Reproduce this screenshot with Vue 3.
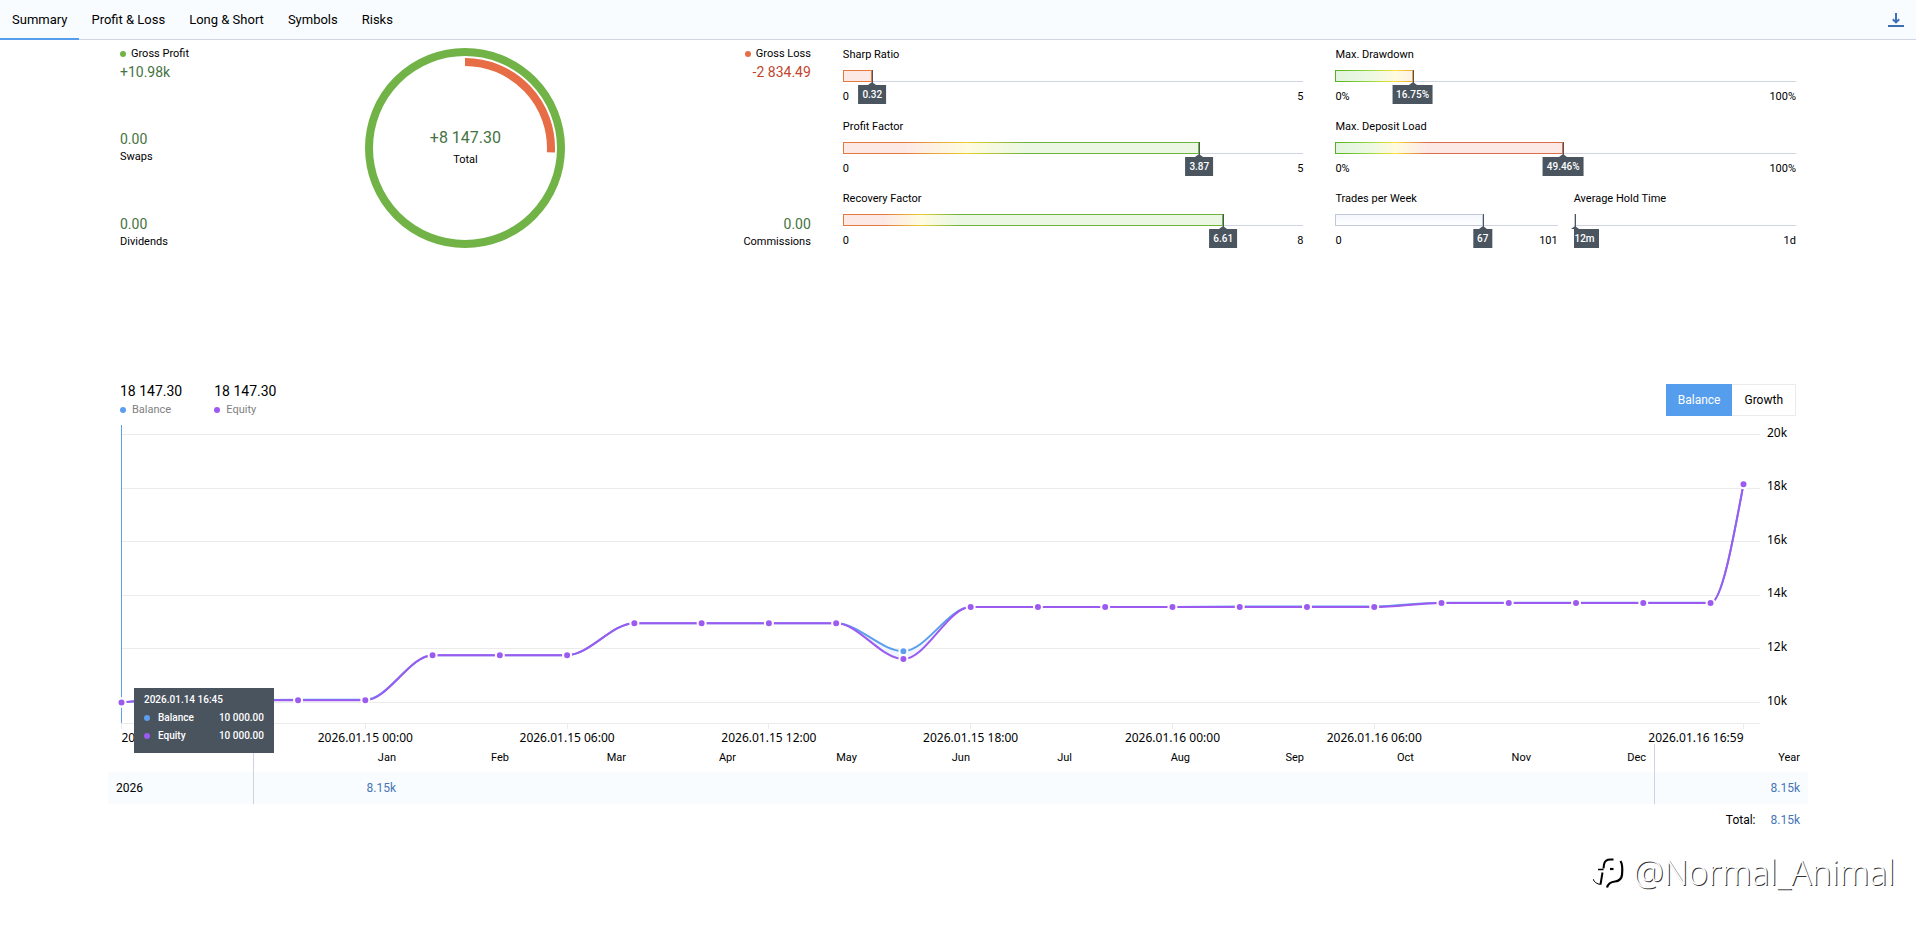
<template>
  <div class="report">
    <header class="topbar">
      <nav class="tabs">
        <button
          v-for="tab in tabs"
          :key="tab"
          class="tab"
          :class="{ active: tab === activeTab }"
          @click="activeTab = tab"
        >{{ tab }}</button>
      </nav>
      <button class="download" aria-label="Download">
        <svg width="16" height="16" viewBox="0 0 16 16">
          <path d="M8 1v9M4.800 7.200L8 10.400l3.200-3.200" fill="none" stroke="#3f6fb5" stroke-width="2" />
          <rect x="0" y="13" width="16" height="2" fill="#3f6fb5" />
        </svg>
      </button>
    </header>

    <main class="content">
      <section class="metrics">
        <!-- Totals -->
        <div class="totals">
          <div class="totals-side">
            <div class="total-item">
              <span class="label"><i class="dot green"></i>Gross Profit</span>
              <span class="amount">+10.98k</span>
            </div>
            <div class="total-item">
              <span class="amount">0.00</span>
              <span class="label">Swaps</span>
            </div>
            <div class="total-item">
              <span class="amount">0.00</span>
              <span class="label">Dividends</span>
            </div>
          </div>

          <div class="ring">
            <svg width="200" height="200" viewBox="0 0 200 200">
              <circle cx="100" cy="100" r="96" fill="none" stroke="#71b347" stroke-width="8" />
              <path :d="lossArc" fill="none" stroke="#e66d45" stroke-width="8" />
            </svg>
            <div class="ring-text">
              <span class="ring-value">+8 147.30</span>
              <span class="label">Total</span>
            </div>
          </div>

          <div class="totals-side right">
            <div class="total-item">
              <span class="label"><i class="dot red"></i>Gross Loss</span>
              <span class="amount negative">-2 834.49</span>
            </div>
            <div class="total-item">
              <span class="amount">0.00</span>
              <span class="label">Commissions</span>
            </div>
          </div>
        </div>

        <!-- Gauges -->
        <div v-for="(column, i) in gaugeColumns" :key="i" class="gauges">
          <div
            v-for="gauge in column"
            :key="gauge.title"
            class="gauge"
            :class="{ half: gauge.half }"
          >
            <div class="gauge-title">{{ gauge.title }}</div>
            <div class="gauge-track">
              <div
                class="gauge-fill"
                :style="{ width: gauge.percent + '%', background: fillBackground(gauge) }"
              ></div>
              <div class="gauge-marker" :style="{ left: gauge.percent + '%' }">
                <span class="gauge-badge" :class="{ clipped: gauge.clipped }">{{ gauge.value }}</span>
              </div>
            </div>
            <div class="gauge-range">
              <span>{{ gauge.min }}</span>
              <span>{{ gauge.max }}</span>
            </div>
          </div>
        </div>
      </section>

      <section class="chart-section">
        <div class="chart-head">
          <div class="legend">
            <div v-for="item in legend" :key="item.name" class="legend-item">
              <span class="legend-value">{{ item.value }}</span>
              <span class="legend-name"><i class="dot" :class="item.color"></i>{{ item.name }}</span>
            </div>
          </div>
          <div class="switch">
            <button :class="{ active: mode === 'Balance' }" @click="mode = 'Balance'">Balance</button>
            <button :class="{ active: mode === 'Growth' }" @click="mode = 'Growth'">Growth</button>
          </div>
        </div>

        <div ref="chart" class="chart">
          <svg :width="width" :height="326">
            <g v-for="level in levels" :key="level">
              <line class="grid" x1="1" :x2="width - 36" :y1="snap(yOf(level))" :y2="snap(yOf(level))" />
              <text class="axis" :x="width - 29" :y="Math.round(yOf(level)) + 2">{{ level / 1000 }}k</text>
            </g>
            <line class="grid" x1="1" :x2="width - 36" y1="305.5" y2="305.5" />
            <g v-for="tick in ticks" :key="tick.text">
              <line class="grid" :x1="snap(xOf(tick.hour))" :x2="snap(xOf(tick.hour))" y1="306" y2="311" />
              <text class="axis" :x="xOf(tick.hour)" y="324" :text-anchor="tick.anchor || 'middle'">{{ tick.text }}</text>
            </g>
            <line class="cursor" x1="1.5" x2="1.5" y1="7" y2="305" />
            <path :d="areaPath" class="area" />
            <path :d="balancePath" class="line balance" />
            <circle v-for="(p, i) in balancePoints" :key="'b' + i" :cx="p.x" :cy="p.y" r="4" class="point balance" />
            <path :d="equityPath" class="line equity" />
            <circle v-for="(p, i) in equityPoints" :key="'e' + i" :cx="p.x" :cy="p.y" r="4" class="point equity" />
          </svg>
          <div class="tooltip">
            <div>2026.01.14 16:45</div>
            <div class="tooltip-row"><i class="dot blue"></i><span>Balance</span><b>10 000.00</b></div>
            <div class="tooltip-row"><i class="dot purple"></i><span>Equity</span><b>10 000.00</b></div>
          </div>
        </div>

        <table class="months">
          <colgroup>
            <col v-for="(w, i) in columnWidths" :key="i" :style="{ width: w / 17 + '%' }" />
          </colgroup>
          <thead>
            <tr>
              <th></th>
              <th v-for="month in months" :key="month">{{ month }}</th>
              <th>Year</th>
            </tr>
          </thead>
          <tbody>
            <tr>
              <th>2026</th>
              <td v-for="month in months" :key="month">{{ month === 'Jan' ? '8.15k' : '' }}</td>
              <td>8.15k</td>
            </tr>
          </tbody>
          <tfoot>
            <tr>
              <td colspan="14"><span class="sum-label">Total:</span>8.15k</td>
            </tr>
          </tfoot>
        </table>
      </section>
    </main>

    <div class="watermark">
      <svg width="32" height="34" viewBox="0 0 32 34" fill="none" stroke="#000">
        <path d="M20.500 4.500h-3c-4.500 0-6 2-6.500 5l-.5 4" stroke-width="2" />
        <path d="M5 14.500h5.500" stroke-width="1.500" />
        <path d="M17 14h3.500" stroke-width="2.200" />
        <path d="M9.500 17.500L7.500 29.500" stroke-width="2" />
        <path d="M0 24c1 3 4 5 7.500 5.500" stroke-width="1" />
        <path d="M27.500 6c2 3 2 9 1.500 14-.5 4-3 6-7 6.500-4.500.5-7 2.500-8 6" stroke-width="2.200" />
      </svg>
      <span>@Normal_Animal</span>
    </div>
  </div>
</template>

<script setup>
import { ref, computed, onMounted, onUnmounted } from "vue";

const tabs = ["Summary", "Profit & Loss", "Long & Short", "Symbols", "Risks"];
const activeTab = ref("Summary");
const mode = ref("Balance");

// Loss arc: share of gross profit, drawn clockwise from the top
const lossAngle = (2834.49 / 10981.79) * Math.PI * 2;
const lossArc = `M100 14A86 86 0 0 1 ${100 + 86 * Math.sin(lossAngle)} ${100 - 86 * Math.cos(lossAngle)}`;

// Gradient stops: [position on the full track in %, border color, fill color]
const RED = ["#e5793f", "#fce9e6"];
const YELLOW = ["#e8cf35", "#fefbe0"];
const GREEN = ["#6db33f", "#ebf7e2"];
const rising = (a, b, c) => [[a, ...RED], [b, ...YELLOW], [c, ...GREEN]];
const falling = [
  [0, "#54b022", "#e2f4de"],
  [7, "#8fd63f", "#ecf8e2"],
  [13, "#fbe03c", "#fefbe0"],
  [20, "#dd6c48", "#fce9e6"],
];

const gaugeColumns = [
  [
    { title: "Sharp Ratio", value: "0.32", percent: 6.4, min: "0", max: "5", stops: rising(13, 27, 40) },
    { title: "Profit Factor", value: "3.87", percent: 77.4, min: "0", max: "5", stops: rising(13, 27, 40) },
    { title: "Recovery Factor", value: "6.61", percent: 82.6, min: "0", max: "8", stops: rising(9, 17, 25) },
  ],
  [
    { title: "Max. Drawdown", value: "16.75%", percent: 16.75, min: "0%", max: "100%", stops: falling },
    { title: "Max. Deposit Load", value: "49.46%", percent: 49.46, min: "0%", max: "100%", stops: falling },
    { title: "Trades per Week", value: "67", percent: 66.3, min: "0", max: "101", half: true },
    { title: "Average Hold Time", value: "12m", percent: 0.8, min: "", max: "1d", half: true, clipped: true },
  ],
];

const fillBackground = (gauge) => {
  if (!gauge.stops) {
    return "linear-gradient(#f3f6fd, #ffffff) padding-box, linear-gradient(#c3c9da, #c3c9da) border-box";
  }
  const gradient = (index) =>
    "linear-gradient(90deg, " +
    gauge.stops.map((s) => `${s[index]} ${(s[0] / gauge.percent) * 100}%`).join(", ") +
    ")";
  return `${gradient(2)} padding-box, ${gradient(1)} border-box`;
};

const legend = [
  { name: "Balance", value: "18 147.30", color: "blue" },
  { name: "Equity", value: "18 147.30", color: "purple" },
];

// Chart scale follows the container width
const chart = ref(null);
const width = ref(1676);
const START = -7.25;
const END = 40.98;

const xOf = (hour) => 1.5 + ((hour - START) / (END - START)) * (width.value - 54);
const yOf = (value) => 284.5 - ((value - 10000) / 2000) * 53.6;
const snap = (v) => Math.floor(v) + 0.5;

const levels = [20000, 18000, 16000, 14000, 12000, 10000];
const ticks = [
  { hour: START, text: "2026.01.14 16:45", anchor: "start" },
  { hour: 0, text: "2026.01.15 00:00" },
  { hour: 6, text: "2026.01.15 06:00" },
  { hour: 12, text: "2026.01.15 12:00" },
  { hour: 18, text: "2026.01.15 18:00" },
  { hour: 24, text: "2026.01.16 00:00" },
  { hour: 30, text: "2026.01.16 06:00" },
  { hour: END, text: "2026.01.16 16:59", anchor: "end" },
];

// [hour, balance, equity]
const series = [
  [START, 10000, 10000],
  [-6, 10090, 10090],
  [-4, 10090, 10080],
  [-2, 10100, 10080],
  [0, 10100, 10080],
  [2, 11765, 11765],
  [4, 11765, 11765],
  [6, 11765, 11765],
  [8, 12960, 12960],
  [10, 12960, 12960],
  [12, 12960, 12960],
  [14, 12960, 12960],
  [16, 11915, 11620],
  [18, 13560, 13560],
  [20, 13560, 13560],
  [22, 13560, 13560],
  [24, 13560, 13560],
  [26, 13580, 13560],
  [28, 13580, 13560],
  [30, 13580, 13560],
  [32, 13725, 13710],
  [34, 13725, 13710],
  [36, 13725, 13710],
  [38, 13725, 13710],
  [40, 13725, 13710],
  [END, 18147.3, 18147.3],
];

const toPoints = (index) => series.map((row) => ({ x: xOf(row[0]), y: yOf(row[index]) }));
const balancePoints = computed(() => toPoints(1));
const equityPoints = computed(() => toPoints(2));

// Monotone cubic curve
const curve = (points) => {
  const last = points.length - 1;
  const slopes = points.slice(1).map((p, i) => (p.y - points[i].y) / (p.x - points[i].x));
  const tangents = points.map((p, i) => {
    if (i === 0 || i === last) return 0;
    const a = slopes[i - 1];
    const b = slopes[i];
    return a * b <= 0 ? 0 : (2 * a * b) / (a + b);
  });
  tangents[0] = (3 * slopes[0] - tangents[1]) / 2;
  tangents[last] = (3 * slopes[last - 1] - tangents[last - 1]) / 2;
  return points.slice(1).reduce((d, p, i) => {
    const q = points[i];
    const h = (p.x - q.x) / 3;
    return d + `C${q.x + h} ${q.y + h * tangents[i]} ${p.x - h} ${p.y - h * tangents[i + 1]} ${p.x} ${p.y}`;
  }, `${points[0].x} ${points[0].y}`);
};

const balancePath = computed(() => "M" + curve(balancePoints.value));
const equityPath = computed(() => "M" + curve(equityPoints.value));
const areaPath = computed(
  () => "M" + curve(balancePoints.value) + "L" + curve([...equityPoints.value].reverse()) + "Z"
);

const months = ["Jan", "Feb", "Mar", "Apr", "May", "Jun", "Jul", "Aug", "Sep", "Oct", "Nov", "Dec"];
const columnWidths = [146, 150, 113, 117, 110, 121, 113, 102, 118, 114, 110, 117, 115, 154];

const measure = () => {
  if (chart.value) width.value = chart.value.clientWidth;
};

onMounted(() => {
  measure();
  window.addEventListener("resize", measure);
});

onUnmounted(() => window.removeEventListener("resize", measure));
</script>

<style>
body {
  margin: 0;
  background: #fff;
}
</style>

<style scoped>
.report {
  position: relative;
  min-height: 100vh;
  font-family: Roboto, "Liberation Sans", sans-serif;
  font-size: 12px;
  color: #000;
}

button {
  border: 0;
  padding: 0;
  background: none;
  font: inherit;
  color: inherit;
  cursor: pointer;
}

.topbar {
  display: flex;
  justify-content: space-between;
  height: 39px;
  background: #f9fcff;
  border-bottom: 1px solid #cfd5e1;
}

.tabs {
  display: flex;
}

.tab {
  box-sizing: border-box;
  height: 40px;
  padding: 0 12px;
  border-bottom: 2px solid transparent;
  font-size: 13px;
}

.tab.active {
  border-bottom-color: #559eed;
}

.download {
  display: flex;
  align-items: center;
  padding: 0 12px;
}

.content {
  padding: 4px 120px 0;
}

.metrics {
  display: grid;
  grid-template-columns: 3fr 2fr 2fr;
  gap: 32px;
}

.totals {
  display: flex;
  justify-content: space-between;
  align-items: stretch;
}

.totals-side {
  display: flex;
  flex: 1;
  flex-direction: column;
  justify-content: space-between;
  padding: 1px 0;
}

.total-item {
  display: flex;
  flex-direction: column;
  line-height: 18px;
}

.right .total-item {
  align-items: flex-end;
}

.label {
  display: flex;
  align-items: center;
  font-size: 11px;
}

.amount {
  font-size: 14px;
  color: #457342;
}

.amount.negative {
  color: #c2452d;
}

.dot {
  display: inline-block;
  flex: none;
  width: 6px;
  height: 6px;
  margin-right: 5px;
  border-radius: 50%;
}

.green { background: #71b347; }
.red { background: #e66d45; }
.blue { background: #5c9fee; }
.purple { background: #9c5af0; }

.ring {
  position: relative;
  padding: 4px 0;
}

.ring svg {
  display: block;
}

.ring-text {
  position: absolute;
  inset: 0;
  display: flex;
  flex-direction: column;
  align-items: center;
  justify-content: center;
  gap: 2px;
  padding-top: 2px;
  line-height: 20px;
}

.ring-value {
  font-size: 16px;
  color: #457342;
}

.gauges {
  display: grid;
  grid-template-columns: 1fr 1fr;
  gap: 10px 16px;
  align-content: start;
}

.gauge {
  grid-column: span 2;
  font-size: 11px;
}

.gauge.half {
  grid-column: span 1;
}

.gauge-title {
  line-height: 22px;
}

.gauge-track {
  position: relative;
  box-sizing: border-box;
  height: 12px;
  margin: 4px 0 6px;
  border-bottom: 1px solid #d0d3e0;
}

.gauge-fill {
  box-sizing: border-box;
  height: 12px;
  border: 1px solid transparent;
}

.gauge-marker {
  position: absolute;
  top: 0;
  width: 1px;
  height: 15px;
  background: #4a5560;
}

.gauge-marker::before {
  content: "";
  position: absolute;
  left: -4px;
  bottom: 0;
  border: 4px solid transparent;
  border-top: 0;
  border-bottom: 3px solid #4a5560;
}

.gauge-badge {
  position: absolute;
  top: 15px;
  left: 0;
  padding: 0 4px;
  transform: translateX(-50%);
  background: #4a5560;
  color: #fff;
  font-size: 10px;
  font-weight: 500;
  line-height: 19px;
}

.gauge-badge.clipped {
  left: -1px;
  padding-left: 0;
  transform: none;
}

.gauge-range {
  display: flex;
  justify-content: space-between;
  line-height: 18px;
}

.gauge-range span:last-child {
  margin-left: auto;
}

.chart-section {
  margin-top: 130px;
}

.chart-head {
  display: flex;
  justify-content: space-between;
  align-items: flex-start;
  height: 36px;
}

.legend {
  display: flex;
  gap: 32px;
}

.legend-item {
  display: flex;
  flex-direction: column;
  gap: 1px;
  line-height: 18px;
}

.legend-value {
  font-size: 14px;
}

.legend-name {
  font-size: 11px;
  color: #808080;
  display: flex;
  align-items: center;
}

.legend-name .dot {
  margin-right: 6px;
}

.switch {
  display: flex;
  margin-top: 2px;
}

.switch button {
  box-sizing: border-box;
  height: 32px;
  padding: 0 12px;
  border: 1px solid #ebebeb;
  border-left: 0;
}

.switch button.active {
  border-color: #559eed;
  border-right: 0;
  background: #559eed;
  color: #fff;
}

.chart {
  position: relative;
}

.chart svg {
  display: block;
  overflow: visible;
}

.grid {
  stroke: #ebebeb;
}

.axis {
  font-family: "Noto Sans", "Open Sans", sans-serif;
  font-size: 12px;
}

.cursor {
  stroke: #5c9fee;
}

.area {
  fill: #eff6fe;
}

.line {
  fill: none;
  stroke-width: 2;
}

.line.balance { stroke: #5c9fee; }
.line.equity { stroke: #9c5af0; }

.point {
  stroke: #fff;
  stroke-width: 2;
}

.point.balance { fill: #5c9fee; }
.point.equity { fill: #9c5af0; }

.tooltip {
  position: absolute;
  z-index: 1;
  top: 270px;
  left: 14px;
  box-sizing: border-box;
  width: 140px;
  height: 65px;
  padding: 3px 10px;
  background: #4a545f;
  color: #fff;
  font-size: 10px;
  font-weight: 500;
  line-height: 18px;
}

.tooltip-row {
  display: flex;
  align-items: center;
}

.tooltip-row .dot {
  margin-right: 8px;
}

.tooltip-row b {
  margin-left: auto;
  font-weight: 500;
}

.months {
  width: calc(100% + 24px);
  margin: 0 -12px;
  border-collapse: separate;
  border-spacing: 0;
  table-layout: fixed;
}

.months th,
.months td {
  padding: 0 8px;
  text-align: right;
  font-weight: 400;
}

.months thead th {
  height: 26px;
  padding-bottom: 2px;
  font-size: 11px;
}

.months td {
  height: 32px;
  color: #4776b5;
}

.months tbody th {
  text-align: left;
}

.months tbody tr {
  background: #f9fcff;
}

.months th:first-child {
  border-right: 1px solid #cfd3e0;
}

.months thead th:last-child,
.months tbody td:last-child {
  border-left: 1px solid #cfd3e0;
}

.sum-label {
  margin-right: 15px;
  color: #000;
}

.watermark {
  position: absolute;
  right: 21px;
  bottom: 30px;
  display: flex;
  align-items: center;
  gap: 9px;
  color: #fff;
  font-family: "Open Sans", "Noto Sans", sans-serif;
  font-size: 34px;
  font-weight: 300;
  line-height: 50px;
  text-shadow: 1px 1px 0 #333;
}
</style>
